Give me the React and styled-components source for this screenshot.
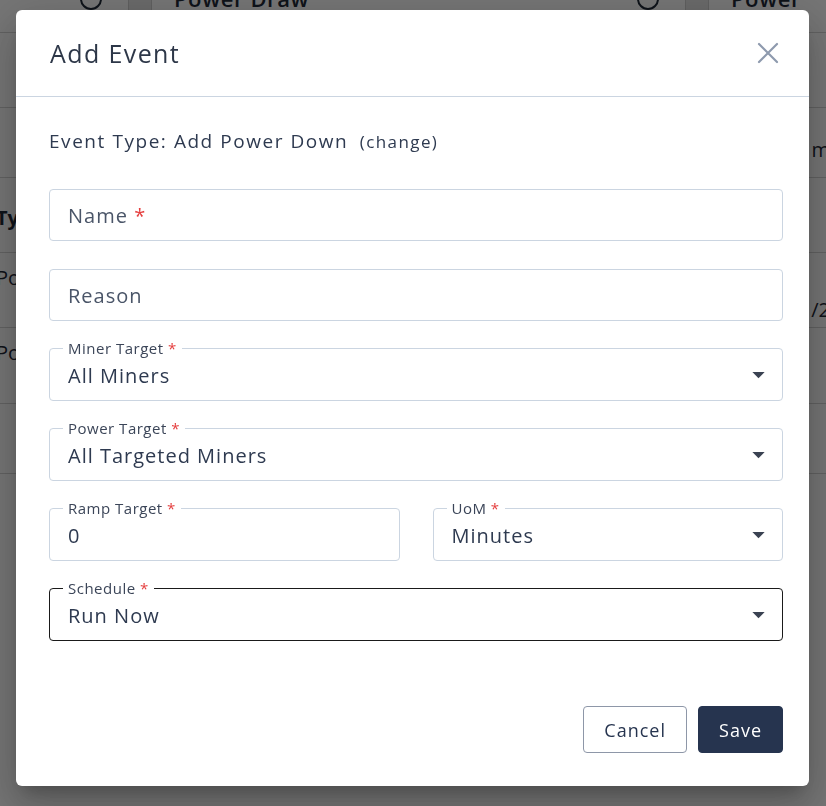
import React from 'react'
import styled, { createGlobalStyle } from 'styled-components'

const GlobalStyle = createGlobalStyle`
  html, body { margin: 0; padding: 0; }
  body {
    font-family: "Open Sans", "Liberation Sans", sans-serif;
    background: #ffffff;
    color: #2e3a50;
  }
  * { box-sizing: border-box; }
`

const headerCells = [
  { w: 128, text: '', icon: true },
  { w: 22, text: '', shade: true },
  { w: 533, text: 'Power Draw', icon: true },
  { w: 22, text: '', shade: true },
  { w: 121, text: 'Power Co' },
]

const App = () => {
  return (
    <>
      <GlobalStyle />
      <Page>
        <HeaderRow>
          {headerCells.map((c, i) => (
            <HeadCell key={i} style={{ width: c.w }} $shade={c.shade}>
              {c.text && <HeadText>{c.text}</HeadText>}
              {c.icon && <HeadIcon />}
            </HeadCell>
          ))}
        </HeaderRow>
        <Band $h={75} />
        <Band $h={70}>
          <SideText $right $y={30}>m</SideText>
        </Band>
        <Band $h={75}>
          <SideText $bold $y={28}>Ty</SideText>
        </Band>
        <Band $h={75}>
          <SideText $y={13}>Po</SideText>
          <SideText $right $y={45}>/2</SideText>
        </Band>
        <Band $h={76}>
          <SideText $y={13}>Po</SideText>
        </Band>
        <Band $h={70} />
      </Page>

      <Backdrop />

      <Dialog role="dialog">
        <DialogHeader>
          <Title>Add Event</Title>
          <CloseButton aria-label="close">
            <svg width="22" height="22" viewBox="0 0 22 22" fill="none">
              <path d="M2 2L20 20M20 2L2 20" stroke="#8e9aae" strokeWidth="2.2" strokeLinecap="round" />
            </svg>
          </CloseButton>
        </DialogHeader>

        <DialogBody>
          <EventType>
            Event Type: Add Power Down <ChangeLink>(change)</ChangeLink>
          </EventType>

          <Form>
            <Field>
              <PlainInput>
                Name <Req>*</Req>
              </PlainInput>
            </Field>
            <Field>
              <PlainInput>Reason</PlainInput>
            </Field>

            <Outlined label="Miner Target" value="All Miners" select />
            <Outlined label="Power Target" value="All Targeted Miners" select />

            <Pair>
              <Outlined label="Ramp Target" value="0" />
              <Outlined label="UoM" value="Minutes" select />
            </Pair>

            <Outlined label="Schedule" value="Run Now" select focused />
          </Form>
        </DialogBody>

        <Actions>
          <Button>Cancel</Button>
          <Button $primary>Save</Button>
        </Actions>
      </Dialog>
    </>
  )
}

const Outlined = ({ label, value, select, focused }) => (
  <Fieldset $focused={focused}>
    <Legend>
      {label} <Req>*</Req>
    </Legend>
    <Value>{value}</Value>
    {select && (
      <Caret viewBox="0 0 14 8">
        <path d="M0 0H14L7 7Z" fill="#3a4252" />
      </Caret>
    )}
  </Fieldset>
)

export default App

const Page = styled.div`
  width: 826px;
  height: 806px;
  overflow: hidden;
  display: flex;
  flex-direction: column;
`

const HeaderRow = styled.div`
  display: flex;
  height: 33px;
  border-bottom: 1px solid #d4d4d4;
`

const HeadCell = styled.div`
  position: relative;
  display: flex;
  align-items: flex-start;
  padding-left: 22px;
  background: ${p => (p.$shade ? '#e6e6e6' : 'transparent')};
  border-left: ${p => (p.$shade ? '1px solid #cfcfcf' : 'none')};
  border-right: ${p => (p.$shade ? '1px solid #cfcfcf' : 'none')};
  flex-shrink: 0;
`

const HeadText = styled.span`
  font-size: 22px;
  font-weight: 600;
  color: #1f2937;
  margin-top: -17px;
  letter-spacing: 0.6px;
`

const HeadIcon = styled.span`
  position: absolute;
  right: 26px;
  top: -12px;
  width: 22px;
  height: 22px;
  border: 2px solid #1f2937;
  border-radius: 50%;
`

const Band = styled.div`
  height: ${p => p.$h}px;
  border-bottom: 1px solid #d4d4d4;
  display: flex;
  align-items: flex-start;
  justify-content: space-between;
  flex-shrink: 0;
`

const SideText = styled.span`
  font-size: 20px;
  line-height: 24px;
  font-weight: ${p => (p.$bold ? 700 : 400)};
  color: #1f2937;
  margin-top: ${p => p.$y}px;
  margin-left: ${p => (p.$right ? 'auto' : '-4px')};
  margin-right: ${p => (p.$right ? '-4px' : '0')};
`

const Backdrop = styled.div`
  position: fixed;
  inset: 0;
  background: rgba(0, 0, 0, 0.54);
`

const Dialog = styled.div`
  position: fixed;
  left: 16px;
  top: 10px;
  width: 793px;
  height: 776px;
  background: #ffffff;
  border-radius: 6px;
  display: flex;
  flex-direction: column;
  box-shadow: 0 11px 15px -7px rgba(0, 0, 0, 0.2), 0 24px 38px 3px rgba(0, 0, 0, 0.14),
    0 9px 46px 8px rgba(0, 0, 0, 0.12);
`

const DialogHeader = styled.div`
  height: 87px;
  flex-shrink: 0;
  display: flex;
  align-items: center;
  justify-content: space-between;
  padding: 0 30px 0 34px;
  border-bottom: 1px solid #cbd5e1;
`

const Title = styled.h2`
  margin: 0;
  font-size: 25px;
  font-weight: 500;
  letter-spacing: 1.4px;
  color: #2d3748;
`

const CloseButton = styled.button`
  border: none;
  background: none;
  padding: 0;
  width: 22px;
  height: 22px;
  cursor: pointer;
`

const DialogBody = styled.div`
  flex: 1;
  padding: 30px 26px 0 33px;
`

const EventType = styled.div`
  font-size: 19px;
  line-height: 28px;
  font-weight: 500;
  letter-spacing: 1.55px;
  color: #2e3a50;
  margin-bottom: 33px;
`

const ChangeLink = styled.span`
  font-size: 17px;
  letter-spacing: 1.4px;
  margin-left: 5px;
  cursor: pointer;
`

const Form = styled.div`
  display: flex;
  flex-direction: column;
  gap: 28px;
`

const Field = styled.div`
  height: 52px;
  flex-shrink: 0;
  border: 1px solid #cbd5e1;
  border-radius: 4px;
  display: flex;
  align-items: center;
  padding: 0 18px;
`

const PlainInput = styled.span`
  font-size: 20px;
  letter-spacing: 1px;
  color: #4a5568;
`

const Req = styled.span`
  color: #e53e3e;
`

const Pair = styled.div`
  display: grid;
  grid-template-columns: 1fr 1fr;
  gap: 33px;
`

const Fieldset = styled.fieldset`
  position: relative;
  display: block;
  flex-shrink: 0;
  margin: -10px 0 0 0;
  min-width: 0;
  height: 62px;
  padding: 0 18px;
  border: 1px solid ${p => (p.$focused ? '#1a1a1a' : '#cbd5e1')};
  border-radius: 4px;
`

const Legend = styled.legend`
  padding: 0 5px;
  margin-left: -5px;
  font-size: 15px;
  letter-spacing: 0.5px;
  color: #3b4558;
  line-height: 18px;
`

const Value = styled.div`
  margin-top: 5px;
  font-size: 20px;
  line-height: 28px;
  letter-spacing: 1px;
  color: #2e3a50;
`

const Caret = styled.svg`
  position: absolute;
  right: 17px;
  top: 15px;
  width: 13px;
  height: 7px;
`

const Actions = styled.div`
  display: flex;
  justify-content: flex-end;
  gap: 11px;
  padding: 0 26px 33px 0;
`

const Button = styled.button`
  height: 47px;
  padding: 0 20px;
  font-family: inherit;
  font-size: 18px;
  font-weight: 500;
  letter-spacing: 1px;
  border-radius: 4px;
  cursor: pointer;
  border: 1px solid ${p => (p.$primary ? '#26344f' : '#8e97a8')};
  background: ${p => (p.$primary ? '#26344f' : '#ffffff')};
  color: ${p => (p.$primary ? '#ffffff' : '#26344f')};
`
